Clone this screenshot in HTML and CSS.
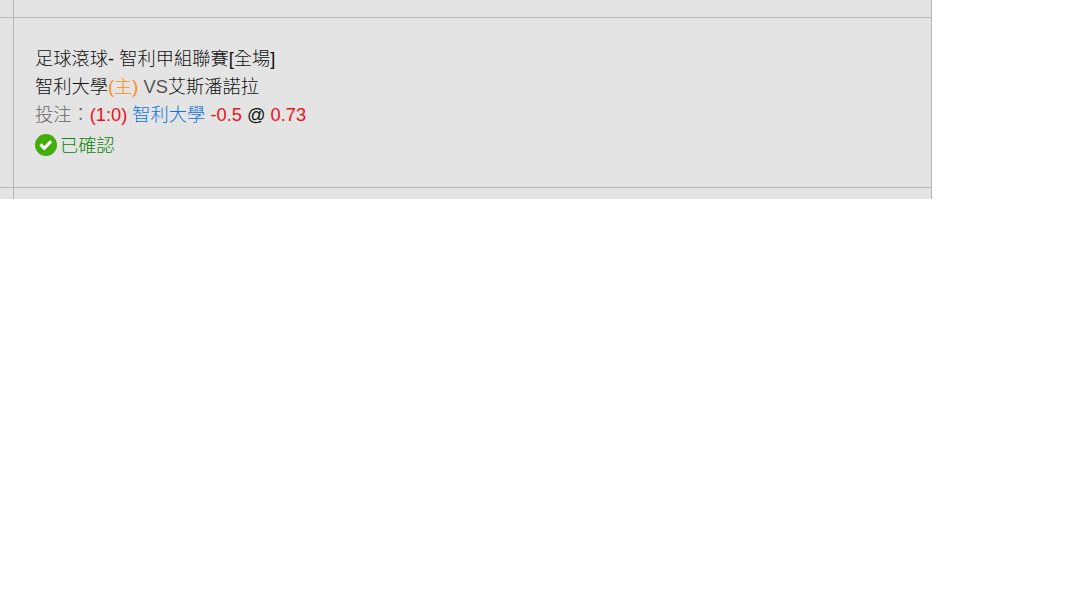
FILE: index.html
```html
<!DOCTYPE html>
<html lang="zh-Hant">
<head>
	<meta charset="utf-8">
	<meta name="viewport" content="width=device-width, initial-scale=1">
	<title>投注</title>
	<link rel="stylesheet" href="styles.css">
</head>
<body>
	<div class="bet-table">
		<div class="cell"></div>
		<div class="cell"></div>

		<div class="cell"></div>
		<div class="cell bet">
			<div class="league">足球滾球- 智利甲組聯賽[全場]</div>
			<div class="teams">智利大學<span class="home">(主)</span> <span class="vs">VS</span>艾斯潘諾拉</div>
			<div class="pick"><span class="label">投注：</span><span class="red">(1:0)</span> <span class="team">智利大學</span> <span class="red">-0.5</span> @ <span class="red">0.73</span></div>
			<div class="status">
				<svg class="check" viewBox="0 0 22 22">
					<circle cx="11" cy="11" r="11" fill="#43ad0b"/>
					<path d="M5.4 10.4l3.9 3.8 6.9-7" fill="none" stroke="#fff" stroke-width="3.1"/>
				</svg>
				<span>已確認</span>
			</div>
		</div>

		<div class="cell"></div>
		<div class="cell"></div>
	</div>
</body>
</html>
```

FILE: styles.css
```css
body {
	margin: 0;
	background-color: #fff;
	font-family: "Liberation Sans", "Noto Sans CJK TC", sans-serif;
}

.bet-table {
	display: grid;
	grid-template-columns: 14px 918px;
	grid-template-rows: 18px 170px 11px;
	width: 932px;
	height: 199px;
	background-color: #e4e4e4;
}

.cell {
	box-sizing: border-box;
	border-right: 1px solid #b5b5b5;
	border-bottom: 1px solid #b9b9b9;
}

.cell:nth-last-child(-n+2) {
	border-bottom: none;
}

.bet {
	padding: 27px 21px 0;
	font-size: 18.25px;
	font-weight: 300;
	line-height: 28px;
	color: #111;
	white-space: nowrap;
}

.home {
	color: #ff8a10;
}

.vs {
	color: #555;
}

.label {
	color: #666;
}

.red {
	color: #f01018;
}

.team {
	color: #0f74e0;
}

.status {
	display: flex;
	align-items: center;
	gap: 3px;
	height: 31px;
	color: #0f8408;
}

.status span {
	padding-top: 2px;
}

.check {
	width: 22px;
	height: 22px;
}
```
